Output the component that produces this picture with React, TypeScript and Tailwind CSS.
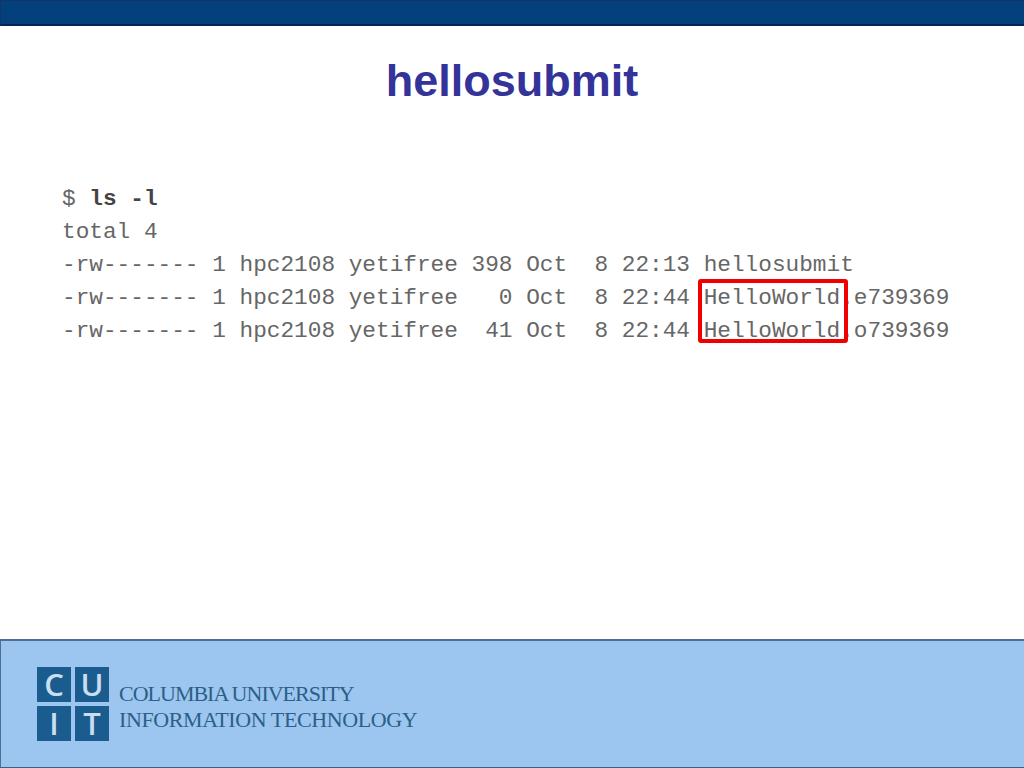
const lines = [
  'total 4',
  '-rw------- 1 hpc2108 yetifree 398 Oct  8 22:13 hellosubmit',
  '-rw------- 1 hpc2108 yetifree   0 Oct  8 22:44 HelloWorld.e739369',
  '-rw------- 1 hpc2108 yetifree  41 Oct  8 22:44 HelloWorld.o739369',
];

function LogoTile({ letter }: { letter: string }) {
  return (
    <div className="flex h-[35px] w-[34px] items-center justify-center bg-[#1b5c8f] font-['Open_Sans',sans-serif] text-[31px] leading-none font-semibold text-[#c9deef]">
      {letter}
    </div>
  );
}

export default function App() {
  return (
    <div className="flex h-[768px] w-[1024px] flex-col overflow-hidden bg-white">
      {/* top bar */}
      <div className="h-[26px] shrink-0 border-t border-b-2 border-l border-t-[#0d3768] border-b-[#0a2450] border-l-[#0d3768] bg-[#03407c]" />

      <h1 className="mt-[28px] text-center font-['Liberation_Sans',sans-serif] text-[45px] leading-[54px] font-bold text-[#333399]">
        hellosubmit
      </h1>

      {/* terminal output */}
      <div className="relative mt-[75px] ml-[62px] font-['Liberation_Mono',monospace] text-[22.75px] leading-[33px] text-[#666666]">
        <pre className="font-['Liberation_Mono',monospace]">
          $ <b className="font-bold text-[#444444]">ls -l</b>
        </pre>
        {lines.map(line => (
          <pre key={line} className="font-['Liberation_Mono',monospace]">{line}</pre>
        ))}
        <div className="absolute top-[96px] left-[636px] h-[64px] w-[150px] rounded-[3px] border-[4px] border-[#f00000]" />
      </div>

      {/* footer */}
      <div className="mt-auto flex h-[129px] shrink-0 items-center border-t-2 border-b border-l border-t-[#4f6f90] border-b-[#3c5f82] border-l-[#4f6f90] bg-[#9cc6ef] pl-[36px]">
        <div className="grid grid-cols-[34px_34px] gap-[4px]">
          <LogoTile letter="C" />
          <LogoTile letter="U" />
          <LogoTile letter="I" />
          <LogoTile letter="T" />
        </div>
        <div className="mt-[6px] ml-[10px] font-['Liberation_Serif',serif] text-[22px] leading-[26px] text-[#2c5f88]">
          <div className="tracking-[-1px]">COLUMBIA UNIVERSITY</div>
          <div className="tracking-[-0.4px]">INFORMATION TECHNOLOGY</div>
        </div>
      </div>
    </div>
  );
}
